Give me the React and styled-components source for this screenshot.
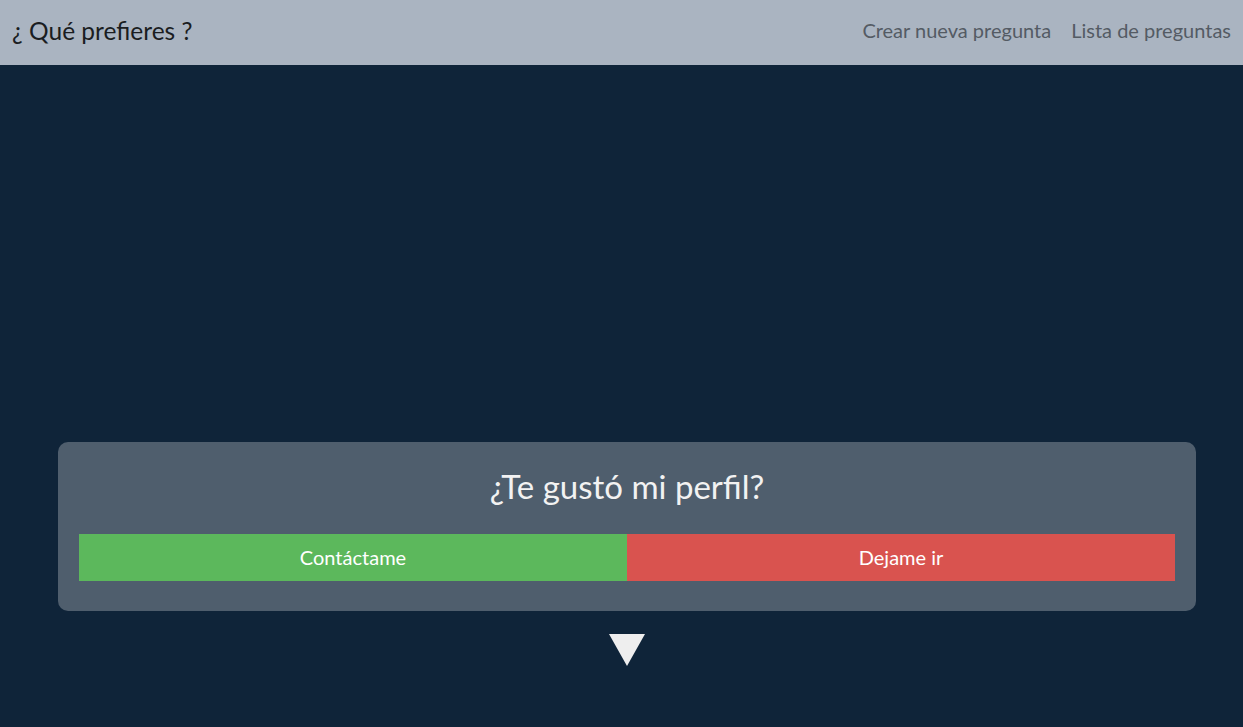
import React from 'react';
import styled, { createGlobalStyle } from 'styled-components';

const GlobalStyle = createGlobalStyle`
  * { box-sizing: border-box; }
  body {
    margin: 0;
    font-family: Lato, "Open Sans", sans-serif;
    background-color: #0f2439;
  }
`;

function App() {
  return (
    <>
      <GlobalStyle />
      <StHeader>
        <StBrand>¿ Qué prefieres ?</StBrand>
        <StNav>
          <StNavLink href="#">Crear nueva pregunta</StNavLink>
          <StNavLink href="#">Lista de preguntas</StNavLink>
        </StNav>
      </StHeader>
      <StMain>
        <StCard>
          <StQuestion>¿Te gustó mi perfil?</StQuestion>
          <StOptions>
            <StOption $color="#5cb85c">Contáctame</StOption>
            <StOption $color="#d9534f">Dejame ir</StOption>
          </StOptions>
        </StCard>
        <StArrow width="36" height="32" viewBox="0 0 36 32">
          <polygon points="0,0 36,0 18,32" fill="#eeeeee" />
        </StArrow>
      </StMain>
    </>
  );
}

const StHeader = styled.header`
  height: 65px;
  background-color: #aab4c1;
  display: flex;
  align-items: center;
  justify-content: space-between;
  padding: 0 12px 5px 12px;
`;

const StBrand = styled.div`
  font-size: 24.5px;
  color: #1a1d21;
`;

const StNav = styled.nav`
  display: flex;
  gap: 20px;
`;

const StNavLink = styled.a`
  font-size: 20px;
  color: #545b64;
  text-decoration: none;
`;

const StMain = styled.main`
  height: 662px;
  display: flex;
  flex-direction: column;
  align-items: center;
  justify-content: flex-end;
  padding: 0 47px 61px 58px;
`;

const StCard = styled.section`
  width: 100%;
  background-color: #4f5e6d;
  border-radius: 10px;
  padding: 22px 21px 30px;
`;

const StQuestion = styled.h2`
  margin: 0 0 20px;
  height: 50px;
  font-size: 33px;
  font-weight: 400;
  color: #f2f2f2;
  text-align: center;
  line-height: 44px;
`;

const StOptions = styled.div`
  display: grid;
  grid-template-columns: 1fr 1fr;
`;

const StOption = styled.button`
  height: 47px;
  border: none;
  padding-bottom: 2px;
  background-color: ${p => p.$color};
  color: #ffffff;
  font-family: Lato, "Open Sans", sans-serif;
  font-size: 20px;
  cursor: pointer;
`;

const StArrow = styled.svg`
  margin-top: 23px;
  display: block;
`;

export default App;
